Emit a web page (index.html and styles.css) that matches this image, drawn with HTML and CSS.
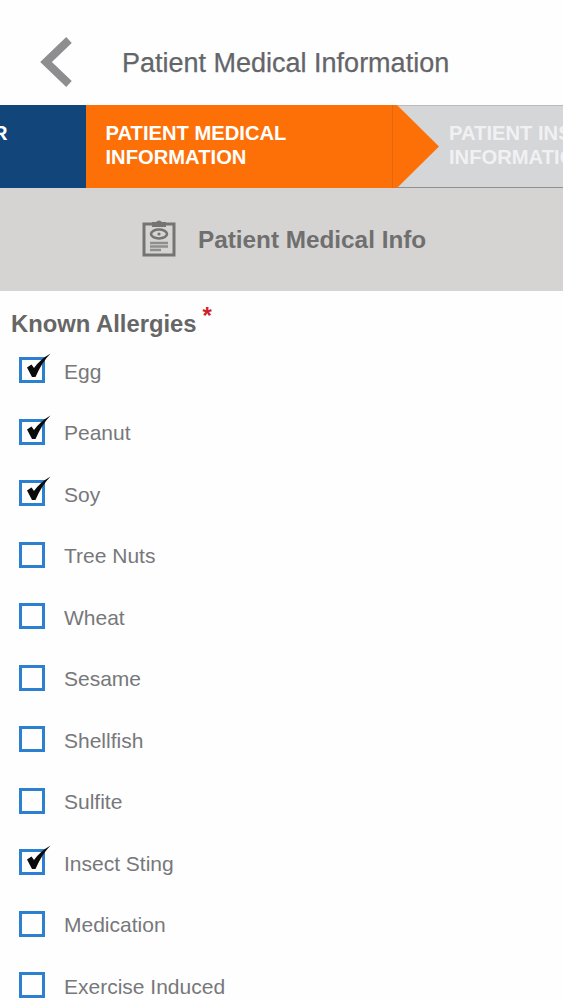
FILE: index.html
```html
<!DOCTYPE html>
<html lang="en">
<head>
<meta charset="utf-8">
<title>Patient Medical Information</title>
<link rel="stylesheet" href="styles.css">
</head>
<body>
<div class="page">
  <header class="topbar">
    <svg class="back" viewBox="0 0 34 50" width="34" height="50"><path d="M30 3 L7 25 L30 47" fill="none" stroke="#8e8e90" stroke-width="8"/></svg>
    <h1 class="title">Patient Medical Information</h1>
  </header>
  <nav class="stepper">
    <div class="step step-done"><span class="step-tail">R</span></div>
    <div class="step step-active">PATIENT MEDICAL<br>INFORMATION
      <svg class="arrow" viewBox="0 0 48 83" width="48" height="83"><path d="M0 0 H5 L47 41.5 L5 83 H0 Z" fill="#fd7008"/><path d="M0 0 V83" stroke="#d9661c" stroke-width="1.5"/></svg>
    </div>
    <div class="step step-next">PATIENT INSURANCE<br>INFORMATION</div>
  </nav>
  <section class="band">
    <svg class="clip" viewBox="0 0 36 38" width="36" height="38">
      <path d="M12 5 H3 V36 H33 V5 H24" fill="none" stroke="#747474" stroke-width="3"/>
      <path d="M11 3 H15 Q18 0 21 3 H25 V8 H11 Z" fill="#747474"/>
      <ellipse cx="18" cy="15" rx="8" ry="4.5" fill="none" stroke="#747474" stroke-width="2.6"/>
      <circle cx="18" cy="15" r="1.6" fill="#747474"/>
      <path d="M9 24 H27 M9 27.5 H27 M9 31 H20" stroke="#8f8f8f" stroke-width="2.4"/>
    </svg>
    <h2 class="band-title">Patient Medical Info</h2>
  </section>
  <main class="form">
    <div class="label">Known Allergies<span class="req">*</span></div>
    <ul class="list">
      <li class="row"><span class="box"><svg class="tick" viewBox="0 0 24 24" width="24" height="24"><path d="M0 14.5 L4.5 11.5 L7 15 Q13 6.5 23.5 0.5 Q15 9 8.5 24 L5 24 Z" fill="#0a0a0a"/></svg></span>Egg</li>
      <li class="row"><span class="box"><svg class="tick" viewBox="0 0 24 24" width="24" height="24"><path d="M0 14.5 L4.5 11.5 L7 15 Q13 6.5 23.5 0.5 Q15 9 8.5 24 L5 24 Z" fill="#0a0a0a"/></svg></span>Peanut</li>
      <li class="row"><span class="box"><svg class="tick" viewBox="0 0 24 24" width="24" height="24"><path d="M0 14.5 L4.5 11.5 L7 15 Q13 6.5 23.5 0.5 Q15 9 8.5 24 L5 24 Z" fill="#0a0a0a"/></svg></span>Soy</li>
      <li class="row"><span class="box"></span>Tree Nuts</li>
      <li class="row"><span class="box"></span>Wheat</li>
      <li class="row"><span class="box"></span>Sesame</li>
      <li class="row"><span class="box"></span>Shellfish</li>
      <li class="row"><span class="box"></span>Sulfite</li>
      <li class="row"><span class="box"><svg class="tick" viewBox="0 0 24 24" width="24" height="24"><path d="M0 14.5 L4.5 11.5 L7 15 Q13 6.5 23.5 0.5 Q15 9 8.5 24 L5 24 Z" fill="#0a0a0a"/></svg></span>Insect Sting</li>
      <li class="row"><span class="box"></span>Medication</li>
      <li class="row"><span class="box"></span>Exercise Induced</li>
    </ul>
  </main>
</div>
</body>
</html>
```
FILE: styles.css
```css
html, body { margin: 0; padding: 0; background: #fff; }
body { font-family: "Liberation Sans", Arial, sans-serif; }
.page { width: 563px; height: 1000px; overflow: hidden; background: #fefefe; }
.topbar { height: 105px; display: flex; align-items: center; padding: 22px 0 0 39px; box-sizing: border-box; }
.back { flex: none; margin-top: -4px; }
.title { margin: 0 0 0 49px; font-size: 27px; font-weight: 400; color: #646569; white-space: nowrap; -webkit-text-stroke: 0.25px #646569; }
.stepper { height: 83px; display: flex; font-size: 20.2px; font-weight: 700; line-height: 24px; color: #fff; }
.step { box-sizing: border-box; white-space: nowrap; padding-top: 16px; flex: none; }
.step-done { width: 85.5px; background: #124579; overflow: hidden; }
.step-tail { display: block; margin-left: -7px; }
.step-active { width: 306.5px; background: #fd7008; padding-left: 20px; position: relative; }
.arrow { position: absolute; left: 306px; top: 0; z-index: 1; }
.step-next { flex: 1; min-width: 0; background: #d5d6d8; padding-left: 57px; color: #f1f1f3; overflow: hidden; border-top: 1px solid #bbb; border-bottom: 1px solid #8f8f8f; padding-top: 15px; }
.band { height: 103px; background: #d5d4d2; display: flex; align-items: center; padding-left: 141px; box-sizing: border-box; }
.clip { flex: none; margin-top: -3px; }
.band-title { margin: 0 0 0 21px; font-size: 24.3px; font-weight: 700; color: #6f6f6f; white-space: nowrap; }
.form { padding-left: 11px; }
.label { font-size: 23.8px; font-weight: 700; color: #666; margin-top: 19px; line-height: 28px; position: relative; white-space: nowrap; }
.req { color: #d0202a; font-size: 24px; position: relative; top: -8px; margin-left: 6px; line-height: 0; }
.list { list-style: none; margin: 3px 0 0; padding: 0; }
.row { height: 61.5px; display: flex; align-items: center; font-size: 21px; color: #77787b; }
.box { width: 26px; height: 26px; flex: none; box-sizing: border-box; border: 3px solid #2d7fcf; margin: -3px 19px 0 8px; position: relative; }
.tick { position: absolute; left: 5px; top: -7px; }
```
